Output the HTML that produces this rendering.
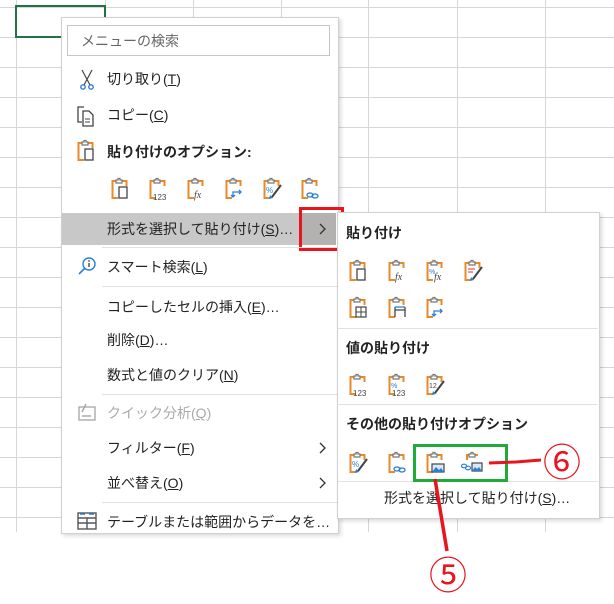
<!DOCTYPE html>
<html><head><meta charset="utf-8"><style>
body{margin:0;width:614px;height:604px;background:#fff;position:relative;overflow:hidden;font-family:"Liberation Sans","Noto Sans CJK JP",sans-serif;color:#222;}
.a{position:absolute}
.t{position:absolute;font-size:14px;line-height:18px;white-space:nowrap}
.b{font-weight:bold}
.sep{position:absolute;height:1px;background:#e1e1e1}
u{text-decoration:underline}
.ic{position:absolute;width:22px;height:24px}
</style></head><body>
<svg class="a" style="left:0;top:0" width="614" height="532">
<g stroke="#d6d6d6" stroke-width="1">
<line x1="16.5" y1="0" x2="16.5" y2="532"/><line x1="105.5" y1="0" x2="105.5" y2="532"/><line x1="193.5" y1="0" x2="193.5" y2="532"/><line x1="281.5" y1="0" x2="281.5" y2="532"/><line x1="368.5" y1="0" x2="368.5" y2="532"/><line x1="457.5" y1="0" x2="457.5" y2="532"/><line x1="545.5" y1="0" x2="545.5" y2="532"/>
<line x1="0" y1="7.5" x2="614" y2="7.5"/><line x1="0" y1="37.5" x2="614" y2="37.5"/><line x1="0" y1="67.5" x2="614" y2="67.5"/><line x1="0" y1="97.5" x2="614" y2="97.5"/><line x1="0" y1="127.5" x2="614" y2="127.5"/><line x1="0" y1="157.5" x2="614" y2="157.5"/><line x1="0" y1="187.5" x2="614" y2="187.5"/><line x1="0" y1="217.5" x2="614" y2="217.5"/><line x1="0" y1="247.5" x2="614" y2="247.5"/><line x1="0" y1="277.5" x2="614" y2="277.5"/><line x1="0" y1="307.5" x2="614" y2="307.5"/><line x1="0" y1="337.5" x2="614" y2="337.5"/><line x1="0" y1="367.5" x2="614" y2="367.5"/><line x1="0" y1="397.5" x2="614" y2="397.5"/><line x1="0" y1="427.5" x2="614" y2="427.5"/><line x1="0" y1="457.5" x2="614" y2="457.5"/><line x1="0" y1="487.5" x2="614" y2="487.5"/><line x1="0" y1="517.5" x2="614" y2="517.5"/>
</g>
<rect x="16" y="6" width="89" height="31" fill="none" stroke="#217346" stroke-width="2"/>
</svg>
<svg width="0" height="0" style="position:absolute"><defs>
<g id="cb"><path d="M6 4H2.5V21H8" fill="none" stroke="#e8892a" stroke-width="2"/><path d="M12 4H16.5V9" fill="none" stroke="#e8892a" stroke-width="2"/><path d="M6 6V3H8V1.5H10V3H12V6Z" fill="#fff" stroke="#777" stroke-width="1.2"/></g>
<path id="chev" d="M1 1L6 6L1 11" fill="none" stroke="#333" stroke-width="1.3"/>
</defs></svg>
<div class="a" style="left:61px;top:17px;width:276px;height:515px;background:#fff;border:1px solid #d0d0d0;box-shadow:2px 2px 4px rgba(0,0,0,.15)"></div>
<div class="a" style="left:67px;top:25px;width:263px;height:31px;border:1px solid #c6c6c6;box-sizing:border-box"></div>
<div class="t" style="left:81px;top:32px;color:#666">メニューの検索</div>
<svg class="ic" style="left:77px;top:68px" viewBox="0 0 22 24"><path d="M5 2L13 17M15 2L7 17" stroke="#444" fill="none" stroke-width="1.2"/><circle cx="6" cy="19" r="2.2" fill="none" stroke="#2a7fd4" stroke-width="1.4"/><circle cx="14" cy="19" r="2.2" fill="none" stroke="#2a7fd4" stroke-width="1.4"/></svg>
<div class="t" style="left:107px;top:70px">切り取り(<u>T</u>)</div>
<svg class="ic" style="left:76px;top:104px" viewBox="0 0 22 24"><path d="M8 3H2V18H6" fill="none" stroke="#444" stroke-width="1.3"/><path d="M7 7H13L17 11V22H7Z" fill="#fff" stroke="#444" stroke-width="1.3"/><path d="M9 15H14M9 18H14" stroke="#444"/></svg>
<div class="t" style="left:107px;top:106px">コピー(<u>C</u>)</div>
<svg class="ic" style="left:76px;top:139px" viewBox="0 0 22 24"><use href="#cb"/><rect x="9" y="10" width="8" height="11" fill="#fff" stroke="#444" stroke-width="1.3"/></svg>
<div class="t b" style="left:107px;top:143px">貼り付けのオプション:</div>
<svg class="ic" style="left:110px;top:177px" viewBox="0 0 22 24"><use href="#cb"/><rect x="9" y="10" width="8" height="11" fill="#fff" stroke="#444" stroke-width="1.3"/></svg>
<svg class="ic" style="left:148px;top:177px" viewBox="0 0 22 24"><use href="#cb"/><text x="5" y="23" font-size="8" fill="#444" font-family="Liberation Sans">123</text></svg>
<svg class="ic" style="left:186px;top:177px" viewBox="0 0 22 24"><use href="#cb"/><text x="8" y="21" font-size="10" font-style="italic" fill="#444" font-family="Liberation Serif">fx</text></svg>
<svg class="ic" style="left:224px;top:177px" viewBox="0 0 22 24"><use href="#cb"/><path d="M9 20V15H17M15 13L17 15L15 17M7 18L9 20L11 18" fill="none" stroke="#2a7fd4" stroke-width="1.3"/></svg>
<svg class="ic" style="left:262px;top:177px" viewBox="0 0 22 24"><use href="#cb"/><text x="4" y="16" font-size="8" fill="#2a7fd4">%</text><path d="M19 8L10 20" stroke="#444" stroke-width="2"/><path d="M8 18L11 21L7 22Z" fill="#2a7fd4"/></svg>
<svg class="ic" style="left:300px;top:177px" viewBox="0 0 22 24"><use href="#cb"/><ellipse cx="10" cy="18" rx="3" ry="2" fill="none" stroke="#2a7fd4" stroke-width="1.3"/><ellipse cx="15" cy="19" rx="3" ry="2" fill="none" stroke="#2a7fd4" stroke-width="1.3"/></svg>
<div class="a" style="left:62px;top:213px;width:237px;height:32px;background:#c8c8c8"></div>
<div class="a" style="left:302px;top:213px;width:34px;height:32px;background:#b4b2b0"></div>
<div class="t" style="left:107px;top:220px">形式を選択して貼り付け(<u>S</u>)…</div>
<svg class="a" style="left:319px;top:223px" width="8" height="13"><use href="#chev"/></svg>
<div class="a" style="left:299px;top:207px;width:45px;height:44px;border:3px solid #e8141e;box-sizing:border-box"></div>
<div class="sep" style="left:102px;top:247px;width:235px"></div>
<svg class="ic" style="left:76px;top:255px" viewBox="0 0 22 24"><circle cx="13" cy="9" r="6" fill="none" stroke="#2a7fd4" stroke-width="1.4"/><path d="M9 13L3 19" stroke="#2a7fd4" stroke-width="1.6"/><path d="M13 8V12" stroke="#444" stroke-width="1.4"/><circle cx="13" cy="6" r=".9" fill="#444"/></svg>
<div class="t" style="left:107px;top:258px">スマート検索(<u>L</u>)</div>
<div class="sep" style="left:102px;top:286px;width:235px"></div>
<div class="t" style="left:107px;top:298px">コピーしたセルの挿入(<u>E</u>)…</div>
<div class="t" style="left:107px;top:331px">削除(<u>D</u>)…</div>
<div class="t" style="left:107px;top:366px">数式と値のクリア(<u>N</u>)</div>
<div class="sep" style="left:102px;top:394px;width:235px"></div>
<svg class="ic" style="left:76px;top:401px" viewBox="0 0 22 24"><rect x="3" y="6" width="16" height="13" fill="none" stroke="#aaa" stroke-width="1.4"/><path d="M6 15H15M6 11L10 3" stroke="#aaa" stroke-width="1.6"/></svg>
<div class="t" style="left:107px;top:404px;color:#aaa">クイック分析(<u>Q</u>)</div>
<div class="t" style="left:107px;top:439px">フィルター(<u>F</u>)</div>
<svg class="a" style="left:319px;top:442px" width="8" height="13"><use href="#chev"/></svg>
<div class="t" style="left:107px;top:474px">並べ替え(<u>O</u>)</div>
<svg class="a" style="left:319px;top:477px" width="8" height="13"><use href="#chev"/></svg>
<div class="sep" style="left:102px;top:502px;width:235px"></div>
<svg class="ic" style="left:76px;top:510px" viewBox="0 0 22 24"><rect x="2" y="3" width="18" height="16" fill="none" stroke="#555" stroke-width="1.4"/><path d="M2 8H20M2 13H20M11 8V19" stroke="#555" stroke-width="1.4"/><path d="M4 4H9M13 4H18" stroke="#2a7fd4" stroke-width="1.5"/></svg>
<div class="t" style="left:107px;top:513px">テーブルまたは範囲からデータを…</div>
<div class="a" style="left:337px;top:212px;width:261px;height:305px;background:#fff;border:1px solid #d0d0d0;box-shadow:2px 2px 4px rgba(0,0,0,.15)"></div>
<div class="t b" style="left:346px;top:224px">貼り付け</div>
<svg class="ic" style="left:348px;top:259px" viewBox="0 0 22 24"><use href="#cb"/><rect x="9" y="10" width="8" height="11" fill="#fff" stroke="#444" stroke-width="1.3"/></svg>
<svg class="ic" style="left:387px;top:259px" viewBox="0 0 22 24"><use href="#cb"/><text x="8" y="21" font-size="10" font-style="italic" fill="#444" font-family="Liberation Serif">fx</text></svg>
<svg class="ic" style="left:425px;top:259px" viewBox="0 0 22 24"><use href="#cb"/><text x="4" y="15" font-size="7" fill="#2a7fd4">%</text><text x="9" y="21" font-size="10" font-style="italic" fill="#444" font-family="Liberation Serif">fx</text></svg>
<svg class="ic" style="left:463px;top:259px" viewBox="0 0 22 24"><use href="#cb"/><path d="M5 10H12M5 13H10" stroke="#e55" stroke-width="1.2"/><path d="M19 8L10 20" stroke="#444" stroke-width="2"/><path d="M8 18L11 21L7 22Z" fill="#2a7fd4"/></svg>
<svg class="ic" style="left:348px;top:296px" viewBox="0 0 22 24"><use href="#cb"/><rect x="8" y="11" width="10" height="10" fill="#fff" stroke="#444" stroke-width="1.2"/><path d="M13 11V21M8 16H18" stroke="#444"/></svg>
<svg class="ic" style="left:387px;top:296px" viewBox="0 0 22 24"><use href="#cb"/><path d="M8 21V11M18 21V11M8 14H18" stroke="#444" stroke-width="1.3"/><path d="M8 11H18" stroke="#2a7fd4" stroke-width="1.3"/></svg>
<svg class="ic" style="left:425px;top:296px" viewBox="0 0 22 24"><use href="#cb"/><path d="M9 20V15H17M15 13L17 15L15 17M7 18L9 20L11 18" fill="none" stroke="#2a7fd4" stroke-width="1.3"/></svg>
<div class="sep" style="left:338px;top:328px;width:260px"></div>
<div class="t b" style="left:346px;top:339px">値の貼り付け</div>
<svg class="ic" style="left:348px;top:373px" viewBox="0 0 22 24"><use href="#cb"/><text x="5" y="23" font-size="8" fill="#444">123</text></svg>
<svg class="ic" style="left:387px;top:373px" viewBox="0 0 22 24"><use href="#cb"/><text x="4" y="15" font-size="7" fill="#2a7fd4">%</text><text x="5" y="23" font-size="8" fill="#444">123</text></svg>
<svg class="ic" style="left:425px;top:373px" viewBox="0 0 22 24"><use href="#cb"/><text x="4" y="15" font-size="7" fill="#444">12</text><path d="M19 8L10 20" stroke="#444" stroke-width="2"/><path d="M8 18L11 21L7 22Z" fill="#2a7fd4"/></svg>
<div class="sep" style="left:338px;top:404px;width:260px"></div>
<div class="t b" style="left:346px;top:415px">その他の貼り付けオプション</div>
<svg class="ic" style="left:348px;top:451px" viewBox="0 0 22 24"><use href="#cb"/><text x="4" y="16" font-size="8" fill="#2a7fd4">%</text><path d="M19 8L10 20" stroke="#444" stroke-width="2"/><path d="M8 18L11 21L7 22Z" fill="#2a7fd4"/></svg>
<svg class="ic" style="left:387px;top:451px" viewBox="0 0 22 24"><use href="#cb"/><ellipse cx="10" cy="18" rx="3" ry="2" fill="none" stroke="#2a7fd4" stroke-width="1.3"/><ellipse cx="15" cy="19" rx="3" ry="2" fill="none" stroke="#2a7fd4" stroke-width="1.3"/></svg>
<svg class="ic" style="left:425px;top:451px" viewBox="0 0 22 24"><use href="#cb"/><rect x="7" y="13" width="12" height="8" fill="#dbe9f7" stroke="#444" stroke-width="1.2"/><path d="M7 21L11 16L14 19L16 17L19 21Z" fill="#2a7fd4"/></svg>
<svg class="ic" style="left:461px;top:451px" viewBox="0 0 22 24"><path d="M8 4H6V9M14 4H17" fill="none" stroke="#e8892a" stroke-width="2"/><path d="M8 6V3H10V1.5H12V3H14V6Z" fill="#fff" stroke="#777" stroke-width="1.2"/><ellipse cx="3" cy="15" rx="2.5" ry="1.8" fill="none" stroke="#2a7fd4" stroke-width="1.2"/><ellipse cx="7" cy="17" rx="2.5" ry="1.8" fill="none" stroke="#2a7fd4" stroke-width="1.2"/><rect x="11" y="12" width="10" height="8" fill="#dbe9f7" stroke="#444" stroke-width="1.2"/><path d="M11 20L14 16L16 18L18 16L21 20Z" fill="#2a7fd4"/></svg>
<div class="sep" style="left:338px;top:481px;width:260px"></div>
<div class="t" style="left:384px;top:489px">形式を選択して貼り付け(<u>S</u>)…</div>
<div class="a" style="left:413px;top:444px;width:95px;height:38px;border:3px solid #1faa3a;box-sizing:border-box"></div>
<svg class="a" style="left:0;top:0" width="614" height="604">
<path d="M489 463L516 462L541 460" stroke="#e8141e" stroke-width="3" fill="none"/>
<path d="M435 479L447 551" stroke="#e8141e" stroke-width="3.5" fill="none"/>
</svg>
<div class="a" style="left:543px;top:439px;font-size:38px;line-height:42px;color:#e8141e;font-family:'Noto Sans CJK JP',sans-serif">⑥</div>
<div class="a" style="left:429px;top:552px;font-size:38px;line-height:42px;color:#e8141e;font-family:'Noto Sans CJK JP',sans-serif">⑤</div>
</body></html>
